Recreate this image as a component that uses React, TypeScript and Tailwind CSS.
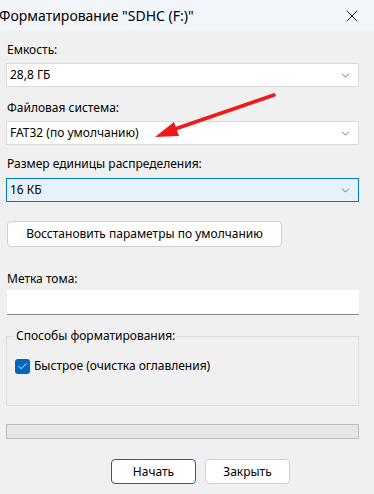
import { X, ChevronDown, Check } from 'lucide-react';

function Combo({ value, focused }: { value: string; focused?: boolean }) {
  return (
    <div
      className={
        'ml-[6px] mr-[15px] h-[24px] flex items-center justify-between pl-[3px] pr-[6px] border ' +
        (focused ? 'bg-[#e5f1fb] border-[#0078d4]' : 'bg-white border-[#dadada]')
      }
    >
      <span className="text-[12px] text-black">{value}</span>
      <ChevronDown className="w-[13px] h-[13px] text-[#555]" strokeWidth={1.5} />
    </div>
  );
}

function Label({ children, className = '' }: { children: React.ReactNode; className?: string }) {
  return <div className={'px-[7px] h-[18px] leading-[18px] text-[12px] text-black ' + className}>{children}</div>;
}

export default function App() {
  return (
    <div className="relative w-[374px] h-[494px] overflow-hidden bg-[#f0f0f0] font-['Noto_Sans','Liberation_Sans',sans-serif]">
      {/* Title bar */}
      <div className="h-[31px] bg-[#f2f5fa] flex items-center justify-between">
        <span className="-ml-[1px] text-[14px] text-black">Форматирование "SDHC (F:)"</span>
        <X className="w-[20px] h-[20px] mr-[12px] text-[#222]" strokeWidth={1.2} />
      </div>

      <Label className="mt-[10px]">Емкость:</Label>
      <div className="mt-[4px]">
        <Combo value="28,8 ГБ" />
      </div>

      <Label className="mt-[12px]">Файловая система:</Label>
      <div className="mt-[4px]">
        <Combo value="FAT32 (по умолчанию)" />
      </div>

      <Label className="mt-[10px]">Размер единицы распределения:</Label>
      <div className="mt-[5px]">
        <Combo value="16 КБ" focused />
      </div>

      <div className="mt-[18px] px-[7px]">
        <button className="w-[275px] h-[26px] bg-white border border-[#d0d0d0] rounded-[4px] text-[12px] text-black">
          Восстановить параметры по умолчанию
        </button>
      </div>

      <Label className="mt-[23px]">Метка тома:</Label>
      <div className="mt-[2px] ml-[7px] mr-[15px] h-[25px] bg-white border-b border-[#8a8a8a]" />

      {/* Format options group */}
      <div className="relative mt-[21px] ml-[6px] mr-[15px] h-[70px] border border-[#dcdcdc]">
        <span className="absolute -top-[10px] left-[8px] px-[1px] bg-[#f0f0f0] text-[12px] leading-[18px] text-black">
          Способы форматирования:
        </span>
        <div className="flex items-center gap-[4px] mt-[20px] ml-[8px]">
          <div className="w-[15px] h-[15px] rounded-[3px] bg-[#0067c0] flex items-center justify-center">
            <Check className="w-[11px] h-[11px] text-white" strokeWidth={2} />
          </div>
          <span className="text-[12px] leading-[18px] text-black">Быстрое (очистка оглавления)</span>
        </div>
      </div>

      <div className="mt-[18px] ml-[6px] mr-[15px] h-[15px] bg-[#e6e6e6] border border-[#bcbcbc]" />

      <div className="mt-[20px] flex gap-[9px] pl-[111px]">
        <button className="w-[85px] h-[25px] bg-white border border-[#0067c0] rounded-[4px] text-[12px] text-black">
          Начать
        </button>
        <button className="w-[85px] h-[25px] bg-white border border-[#d0d0d0] rounded-[4px] text-[12px] text-black">
          Закрыть
        </button>
      </div>

      {/* Red annotation arrow */}
      <svg className="absolute left-0 top-0 pointer-events-none" width="374" height="494">
        <line x1="274" y1="95" x2="172" y2="130" stroke="#f01818" strokeWidth="3.5" strokeLinecap="round" />
        <polygon points="155,137 174,122 179,136" fill="#f01818" />
      </svg>
    </div>
  );
}
